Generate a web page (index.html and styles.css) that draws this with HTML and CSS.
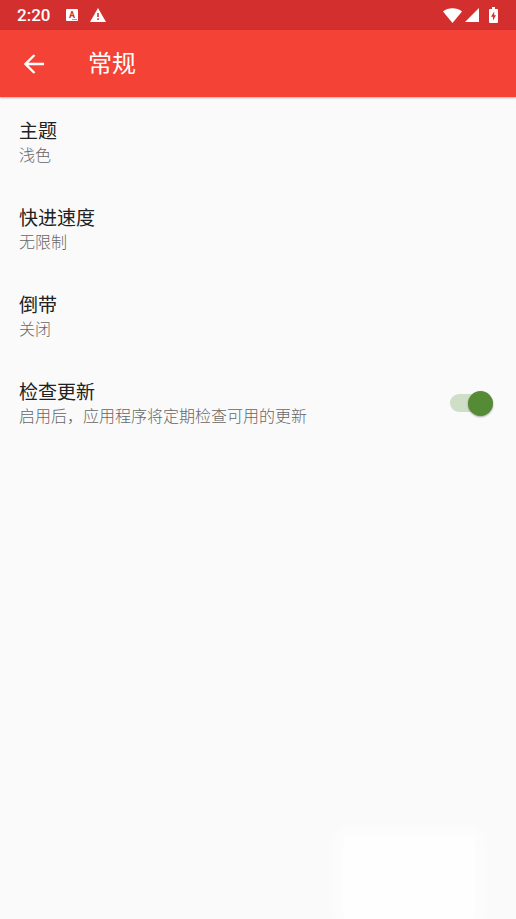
FILE: index.html
```html
<!DOCTYPE html>
<html lang="zh-CN">
<head>
  <meta charset="UTF-8" />
  <meta name="viewport" content="width=device-width, initial-scale=1" />
  <title>常规</title>
  <link rel="stylesheet" href="styles.css">
</head>
<body>

  <div class="status-bar">
    <span class="clock">2:20</span>
    <svg class="icon-ime" width="12" height="12" viewBox="0 0 12 12">
      <rect width="12" height="12" rx="1" fill="#fff" />
      <text x="6" y="9" text-anchor="middle">A</text>
      <path d="M6 10.5h5" stroke="#d32f2f" stroke-width="0.6" />
    </svg>
    <svg class="icon-warning" width="16" height="14" viewBox="0 0 16 14">
      <path d="M8 0L16 14H0z" fill="#fff" />
      <path d="M7.2 5h1.6v4H7.2zM7.2 10.3h1.6v1.7H7.2z" fill="#d32f2f" />
    </svg>
    <div class="status-right">
      <svg width="19" height="15" viewBox="0 0 19 15">
        <path d="M9.5 15L0 3.4C5-.8 14-.8 19 3.4z" fill="#fff" />
      </svg>
      <svg width="14" height="14" viewBox="0 0 14 14">
        <path d="M14 0v14H0z" fill="#fff" />
      </svg>
      <svg class="icon-battery" width="9" height="16" viewBox="0 0 9 16">
        <path d="M3 0h3v2h2a1 1 0 0 1 1 1v12a1 1 0 0 1-1 1H1a1 1 0 0 1-1-1V3a1 1 0 0 1 1-1h2z" fill="#fff" />
        <path d="M5.2 4.5L2 9.8h2v3.7L7 8.2H5.2z" fill="#d32f2f" />
      </svg>
    </div>
  </div>

  <header class="toolbar">
    <button class="back-btn" type="button" aria-label="返回">
      <svg width="20" height="20" viewBox="0 0 20 20">
        <path d="M20 10H2M10.5 1L1.5 10l9 9" fill="none" stroke="#fff" stroke-width="2.3" />
      </svg>
    </button>
    <h1>常规</h1>
  </header>

  <main class="settings">
    <button class="setting" type="button">
      <span class="setting-title">主题</span>
      <span class="setting-summary">浅色</span>
    </button>
    <button class="setting" type="button">
      <span class="setting-title">快进速度</span>
      <span class="setting-summary">无限制</span>
    </button>
    <button class="setting" type="button">
      <span class="setting-title">倒带</span>
      <span class="setting-summary">关闭</span>
    </button>
    <label class="setting setting-toggle" for="updates">
      <span class="setting-text">
        <span class="setting-title">检查更新</span>
        <span class="setting-summary">启用后，应用程序将定期检查可用的更新</span>
      </span>
      <input class="switch" type="checkbox" id="updates" checked />
    </label>
  </main>

  <div class="glow"></div>

</body>
</html>
```
FILE: styles.css
```css
* {
  box-sizing: border-box;
}

body {
  margin: 0;
  min-height: 100vh;
  background-color: #fafafa;
  color: #212121;
  font-family: Roboto, "Noto Sans CJK SC", sans-serif;
}

.status-bar {
  display: flex;
  align-items: center;
  height: 30px;
  padding: 0 18px 0 17px;
  background-color: #d32f2f;
  color: #fff;
}

.clock {
  font-size: 17px;
  font-weight: 500;
  line-height: 30px;
}

.icon-ime {
  margin-left: 16px;
}

.icon-ime text {
  font-size: 9px;
  font-weight: 700;
  fill: #d32f2f;
}

.icon-warning {
  margin-left: 12px;
}

.status-right {
  display: flex;
  align-items: center;
  gap: 3px;
  margin-left: auto;
}

.icon-battery {
  margin-left: 7px;
}

.toolbar {
  display: flex;
  align-items: center;
  height: 67px;
  padding: 0 14px;
  background-color: #f44336;
  color: #fff;
  box-shadow: 0 1px 2px rgba(0, 0, 0, 0.3);
}

.back-btn {
  display: flex;
  align-items: center;
  justify-content: center;
  width: 40px;
  height: 40px;
  padding: 0;
  border: none;
  background: none;
  cursor: pointer;
}

.toolbar h1 {
  margin: 0 0 0 34px;
  font-size: 24px;
  font-weight: 400;
  line-height: 36px;
}

.settings {
  padding-top: 1px;
}

.setting {
  display: block;
  width: 100%;
  padding: 20px 19px 19px;
  border: none;
  background: none;
  color: inherit;
  font-family: inherit;
  text-align: left;
  cursor: pointer;
}

.setting-title,
.setting-summary {
  display: block;
}

.setting-title {
  font-size: 19px;
  line-height: 28px;
}

.setting-summary {
  color: #666;
  font-size: 16px;
  font-weight: 300;
  line-height: 20px;
}

.setting-toggle {
  display: flex;
  align-items: center;
  justify-content: space-between;
  padding-right: 23px;
}

.switch {
  display: flex;
  align-items: center;
  flex-shrink: 0;
  appearance: none;
  width: 43px;
  height: 18px;
  margin: 0;
  border-radius: 9px;
  background-color: #ccc;
  cursor: pointer;
}

.switch::before {
  content: "";
  width: 25px;
  height: 25px;
  border-radius: 50%;
  background-color: #fff;
  box-shadow: 0 1px 2px rgba(0, 0, 0, 0.35);
}

.switch:checked {
  justify-content: flex-end;
  background-color: #cfdec6;
}

.switch:checked::before {
  background-color: #558b35;
}

/* soft light patch in the bottom corner */
.glow {
  position: fixed;
  right: 42px;
  bottom: 0;
  width: 130px;
  height: 82px;
  background-color: #fefefe;
  box-shadow: 0 0 16px 6px #fefefe;
  pointer-events: none;
}
```
